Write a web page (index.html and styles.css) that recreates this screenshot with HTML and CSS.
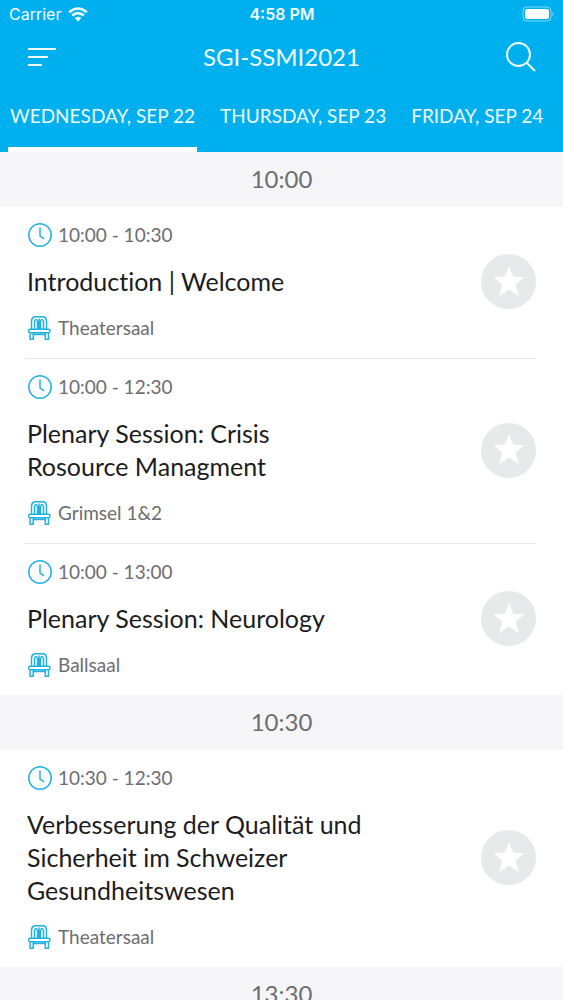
FILE: index.html
```html
<!DOCTYPE html>
<html lang="en">
<head>
<meta charset="utf-8">
<meta name="viewport" content="width=device-width, initial-scale=1">
<title>SGI-SSMI2021</title>
<link rel="stylesheet" href="styles.css">
</head>
<body>
<svg class="defs" aria-hidden="true">
  <symbol id="clock" viewBox="0 0 24 24"><circle cx="12" cy="12" r="11.200"/><path d="M12 4.500v8.500l4.200 2.800"/></symbol>
  <symbol id="chair" viewBox="0 0 24 24"><path d="M3.500 13.300V5.500Q3.500 .7 8 .7h6.500Q18.500 .7 18.500 5.500v7.800M6.500 13V5.500q.4-2 1.500-2t1.500 2V13M12.500 13V5.500q.4-2 1.500-2t1.500 2V13M11 13V2.500M2 13.300h18.500q1.500 0 1.500 1.700t-1.500 1.700H2Q.5 16.700.5 15T2 13.300ZM2 16.700v6.500h3.200v-6.500M17.300 16.700v6.500h3.200v-6.500M5.200 18.500h12.100"/></symbol>
  <symbol id="star" viewBox="0 0 32 32"><path d="M16 0l4.200 10.800 11.300.5-8.800 7.300 3 11.400L16 23.500 6.300 30l3-11.400L.5 11.300l11.300-.5z"/></symbol>
</svg>
<header class="header">
  <div class="status">
    <span class="carrier">Carrier
      <svg class="wifi" viewBox="0 0 20 15" aria-hidden="true"><path d="M1.200 5.200q8.800-7.400 17.600 0M4.200 8.600q5.800-4.800 11.600 0"/><path class="dot" d="M6.700 11q3.300-2.600 6.600 0L10 14.500z"/></svg>
    </span>
    <span class="now">4:58 PM</span>
    <svg class="battery" viewBox="0 0 33 16" aria-hidden="true"><rect class="case" x="1" y="1" width="28" height="14" rx="4"/><rect x="3" y="3" width="24" height="10" rx="2"/><path d="M30.500 5.500q2 2.500 0 5z" opacity=".5"/></svg>
  </div>
  <div class="nav">
    <button class="icon-button" type="button" aria-label="Menu"><svg class="menu" viewBox="0 0 30 20"><path d="M1 2h28M1 10h20M1 18h14"/></svg></button>
    <h1 class="heading">SGI-SSMI2021</h1>
    <button class="icon-button" type="button" aria-label="Search"><svg class="search" viewBox="0 0 30 30"><circle cx="12.500" cy="12.500" r="11.500"/><path d="M20.500 20.500l8.500 8.500"/></svg></button>
  </div>
  <nav class="tabs">
    <a class="tab active" href="#wed">WEDNESDAY, SEP 22</a>
    <a class="tab" href="#thu">THURSDAY, SEP 23</a>
    <a class="tab" href="#fri">FRIDAY, SEP 24</a>
  </nav>
</header>
<main>
  <h2 class="slot">10:00</h2>
  <article class="session">
    <div class="info">
      <p class="meta"><svg class="icon"><use href="#clock"/></svg>10:00 - 10:30</p>
      <h3 class="title">Introduction | Welcome</h3>
      <p class="meta"><svg class="icon"><use href="#chair"/></svg>Theatersaal</p>
    </div>
    <button class="favourite" type="button" aria-label="Add to favourites"><svg class="star"><use href="#star"/></svg></button>
  </article>
  <article class="session">
    <div class="info">
      <p class="meta"><svg class="icon"><use href="#clock"/></svg>10:00 - 12:30</p>
      <h3 class="title">Plenary Session: Crisis<br>Rosource Managment</h3>
      <p class="meta"><svg class="icon"><use href="#chair"/></svg>Grimsel 1&amp;2</p>
    </div>
    <button class="favourite" type="button" aria-label="Add to favourites"><svg class="star"><use href="#star"/></svg></button>
  </article>
  <article class="session">
    <div class="info">
      <p class="meta"><svg class="icon"><use href="#clock"/></svg>10:00 - 13:00</p>
      <h3 class="title">Plenary Session: Neurology</h3>
      <p class="meta"><svg class="icon"><use href="#chair"/></svg>Ballsaal</p>
    </div>
    <button class="favourite" type="button" aria-label="Add to favourites"><svg class="star"><use href="#star"/></svg></button>
  </article>
  <h2 class="slot">10:30</h2>
  <article class="session">
    <div class="info">
      <p class="meta"><svg class="icon"><use href="#clock"/></svg>10:30 - 12:30</p>
      <h3 class="title">Verbesserung der Qualität und<br>Sicherheit im Schweizer<br>Gesundheitswesen</h3>
      <p class="meta"><svg class="icon"><use href="#chair"/></svg>Theatersaal</p>
    </div>
    <button class="favourite" type="button" aria-label="Add to favourites"><svg class="star"><use href="#star"/></svg></button>
  </article>
  <h2 class="slot">13:30</h2>
</main>
</body>
</html>
```
FILE: styles.css
```css
* { box-sizing: border-box; }
html { scrollbar-width: none; }
body { margin: 0; background: #fff; color: #1c1c1e; font-family: Lato, "Open Sans", sans-serif; font-variant-ligatures: none; }
h1, h2, h3, p { margin: 0; font-weight: 400; }
button { padding: 0; border: 0; background: none; color: inherit; cursor: pointer; }
svg { display: block; flex: none; }
.defs { display: none; }

.header { background: #00b0ee; color: #effcff; }
.status { display: grid; grid-template-columns: 1fr auto 1fr; align-items: center; height: 28px; padding: 0 8px 0 9px; font: 16px/28px Inter, sans-serif; }
.carrier { display: flex; align-items: center; gap: 7px; }
.wifi { width: 20px; height: 15px; fill: none; stroke: currentColor; stroke-width: 2.6; }
.wifi .dot { fill: currentColor; stroke: none; }
.now { font-weight: 600; }
.battery { justify-self: end; width: 33px; height: 16px; fill: #fff; }
.battery .case { fill: none; stroke: #7fdaf9; }

.nav { display: flex; align-items: center; justify-content: space-between; height: 58px; padding: 0 27px; }
.icon-button { display: flex; align-items: center; width: 30px; height: 30px; }
.menu { width: 30px; height: 20px; fill: none; stroke: currentColor; stroke-width: 2; }
.search { width: 30px; height: 30px; fill: none; stroke: currentColor; stroke-width: 2; }
.heading { font-size: 24px; line-height: 32px; }

.tabs { display: flex; gap: 21px; height: 66px; padding: 0 8px; }
.tab { padding: 0 2px; border-bottom: 5px solid transparent; color: inherit; font-size: 19px; line-height: 60px; text-decoration: none; white-space: nowrap; }
.tab.active { border-color: #fff; }

.slot { height: 55px; background: #f6f5f8; color: #6d6e72; font-size: 24px; line-height: 54px; text-align: center; }
.session { display: flex; align-items: center; justify-content: space-between; margin: 0 27px 0 25px; padding: 16px 0 18px 2px; }
.session:has(+ .session) { border-bottom: 1px solid #e6e6e8; }
.meta { display: flex; align-items: center; gap: 6px; padding-left: 1px; color: #6d6e72; font-size: 19px; line-height: 24px; }
.icon { width: 24px; height: 24px; fill: none; stroke: #22b2e2; stroke-width: 1.5; }
.title { padding: 18px 0; font-size: 25px; line-height: 33px; }
.favourite { display: grid; place-items: center; flex: none; width: 55px; height: 55px; border-radius: 50%; background: #e7e9eb; }
.star { width: 32px; height: 32px; fill: #fff; }
```
